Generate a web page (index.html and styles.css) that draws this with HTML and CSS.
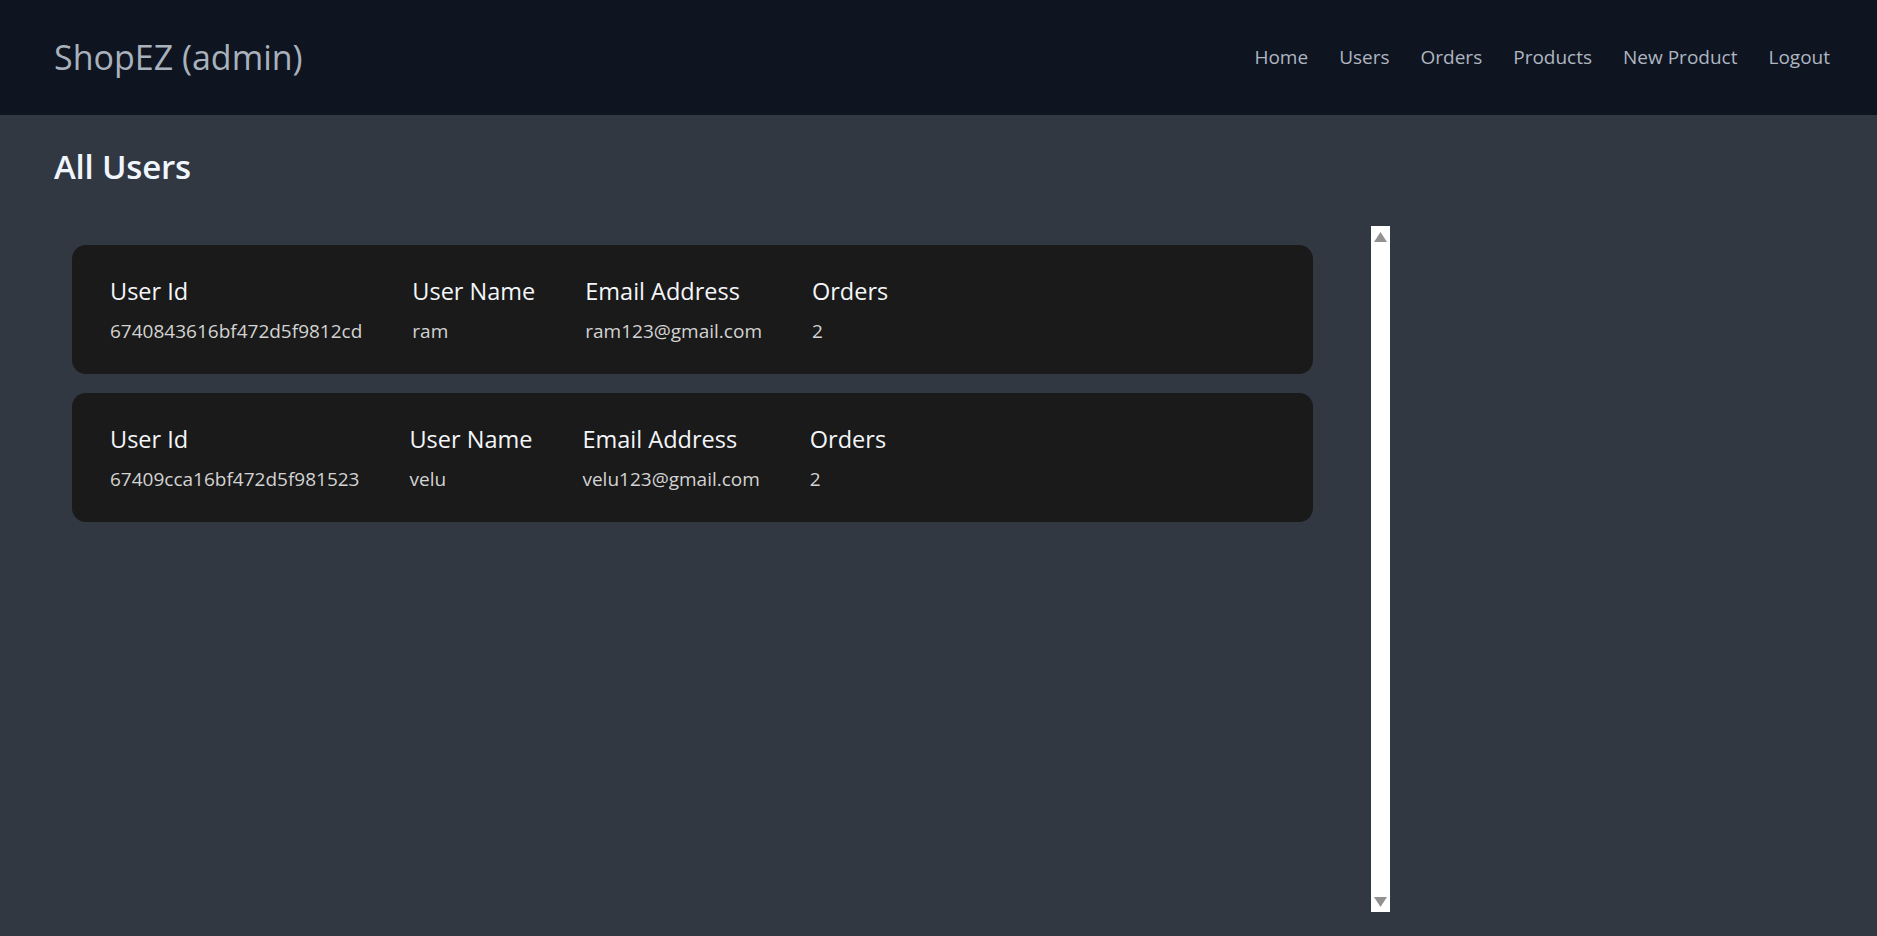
FILE: index.html
```html
<!DOCTYPE html>
<html lang="en">
<head>
<meta charset="utf-8">
<title>ShopEZ (admin) - All Users</title>
<link rel="stylesheet" href="styles.css">
</head>
<body>
<header class="topbar">
  <div class="brand">ShopEZ (admin)</div>
  <nav class="nav">
    <a class="nav-link" href="#">Home</a>
    <a class="nav-link" href="#">Users</a>
    <a class="nav-link" href="#">Orders</a>
    <a class="nav-link" href="#">Products</a>
    <a class="nav-link" href="#">New Product</a>
    <a class="nav-link" href="#">Logout</a>
  </nav>
</header>
<main class="page">
  <h1 class="page-title">All Users</h1>
  <div class="scroll-box">
    <div class="user-list">
      <div class="user-card">
        <div class="col">
          <div class="label">User Id</div>
          <div class="value">6740843616bf472d5f9812cd</div>
        </div>
        <div class="col">
          <div class="label">User Name</div>
          <div class="value">ram</div>
        </div>
        <div class="col">
          <div class="label">Email Address</div>
          <div class="value">ram123@gmail.com</div>
        </div>
        <div class="col">
          <div class="label">Orders</div>
          <div class="value">2</div>
        </div>
      </div>
      <div class="user-card">
        <div class="col">
          <div class="label">User Id</div>
          <div class="value">67409cca16bf472d5f981523</div>
        </div>
        <div class="col">
          <div class="label">User Name</div>
          <div class="value">velu</div>
        </div>
        <div class="col">
          <div class="label">Email Address</div>
          <div class="value">velu123@gmail.com</div>
        </div>
        <div class="col">
          <div class="label">Orders</div>
          <div class="value">2</div>
        </div>
      </div>
    </div>
    <div class="scrollbar">
      <svg class="arrow" width="13" height="10" viewBox="0 0 13 10"><polygon points="6.5,0 13,10 0,10" fill="#929292"/></svg>
      <svg class="arrow" width="13" height="10" viewBox="0 0 13 10"><polygon points="0,0 13,0 6.5,10" fill="#929292"/></svg>
    </div>
  </div>
</main>
</body>
</html>
```
FILE: styles.css
```css
* { box-sizing: border-box; }

html, body {
  margin: 0;
  padding: 0;
}

body {
  background: #323842;
  font-family: "Open Sans", "Noto Sans", "DejaVu Sans", sans-serif;
  height: 936px;
  overflow: hidden;
}

.topbar {
  height: 115px;
  background: #0e1420;
  display: flex;
  align-items: center;
  justify-content: space-between;
  padding: 0 47px 2px 54px;
}

.brand {
  color: #a9b1bc;
  font-size: 34px;
  line-height: 40px;
}

.nav {
  display: flex;
  align-items: center;
  gap: 31px;
}

.nav-link {
  color: #aeb6c1;
  text-decoration: none;
  font-size: 19px;
  line-height: 26px;
}

.page {
  padding: 0 0 0 54px;
}

.page-title {
  margin: 32px 0 0 0;
  color: #f0f6fd;
  font-size: 33px;
  line-height: 40px;
  font-weight: 600;
  letter-spacing: -0.2px;
}

.scroll-box {
  margin-top: 39px;
  width: 1336px;
  height: 686px;
  display: flex;
}

.user-list {
  flex: 1;
  padding: 19px 58px 0 18px;
  display: flex;
  flex-direction: column;
  gap: 19px;
}

.user-card {
  background: #1a1a1a;
  border-radius: 14px;
  height: 129px;
  padding: 31px 38px 0 38px;
  display: flex;
  gap: 50px;
}

.col {
  display: flex;
  flex-direction: column;
  gap: 12px;
}

.label {
  color: #f4f6f9;
  font-size: 23.5px;
  line-height: 30px;
}

.value {
  color: #d3d3d3;
  font-size: 19px;
  line-height: 26px;
}

.scrollbar {
  width: 19px;
  background: #ffffff;
  display: flex;
  flex-direction: column;
  justify-content: space-between;
  align-items: center;
  padding: 6px 0 5px 0;
}

.arrow {
  display: block;
}
```
